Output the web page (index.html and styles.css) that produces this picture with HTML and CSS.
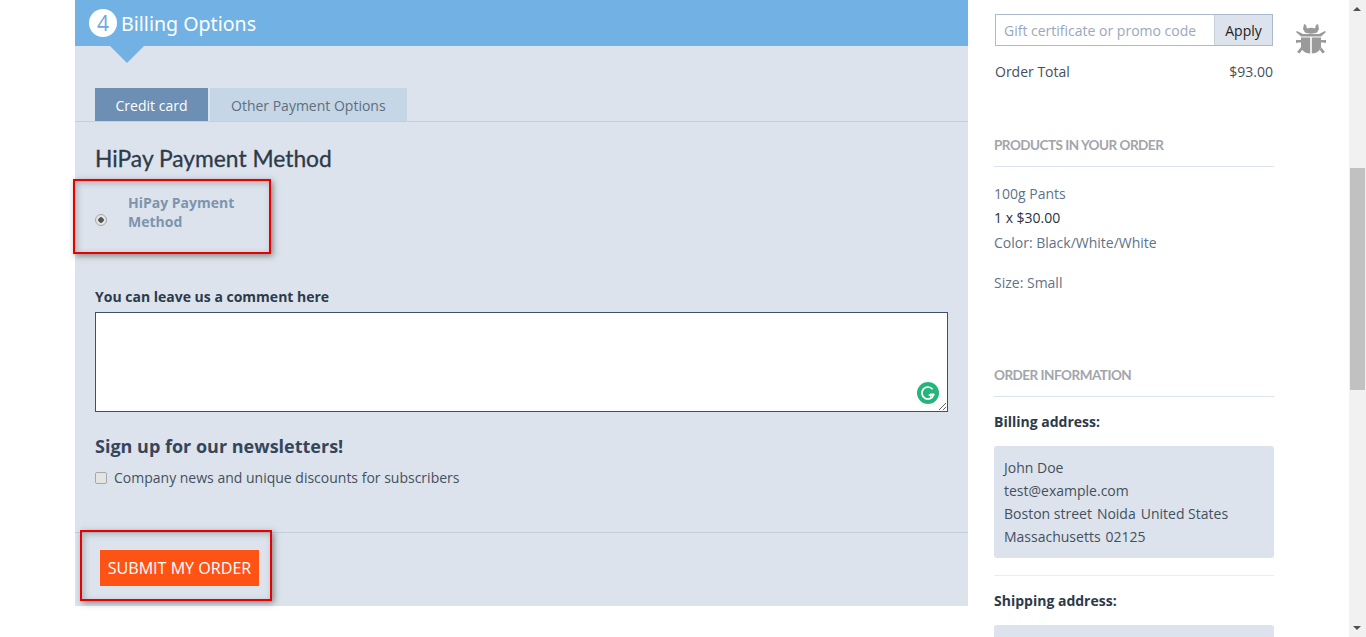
FILE: index.html
```html
<!DOCTYPE html>
<html lang="en">
<head>
    <meta charset="UTF-8">
    <title>Checkout</title>
    <link rel="stylesheet" href="styles.css">
</head>
<body>
    <div class="page">
        <main class="checkout">
            <div class="step-head">
                <span class="step-num">4</span>
                <h2>Billing Options</h2>
            </div>
            <div class="tabs">
                <span class="tab active">Credit card</span>
                <span class="tab">Other Payment Options</span>
            </div>
            <div class="pay-body">
                <h3 class="pay-title">HiPay Payment Method</h3>
                <label class="pay-option">
                    <input type="radio" checked>
                    <span>HiPay Payment Method</span>
                </label>
                <label class="comment-label" for="comment">You can leave us a comment here</label>
                <div class="comment-wrap">
                    <textarea id="comment"></textarea>
                    <svg class="grammarly" width="24" height="24" viewBox="0 0 24 24">
                        <circle cx="12" cy="12" r="11" fill="#25b57b"/>
                        <path d="M16.600 8.200A6 6 0 1 0 17.600 14H12.600" fill="none" stroke="#fff" stroke-width="1.700"/>
                        <path d="M14.800 16.600V13.200H18.200" fill="none" stroke="#fff" stroke-width="1.300"/>
                    </svg>
                </div>
                <h3 class="news-title">Sign up for our newsletters!</h3>
                <label class="news-option">
                    <input type="checkbox">
                    <span>Company news and unique discounts for subscribers</span>
                </label>
            </div>
            <div class="submit-row">
                <button class="submit-btn">SUBMIT MY ORDER</button>
            </div>
            <div class="mark mark-pay"></div>
            <div class="mark mark-submit"></div>
        </main>

        <aside class="summary">
            <div class="promo">
                <input type="text" placeholder="Gift certificate or promo code">
                <button>Apply</button>
            </div>
            <div class="total">
                <span>Order Total</span>
                <span>$93.00</span>
            </div>

            <h4 class="side-head products-head">PRODUCTS IN YOUR ORDER</h4>
            <div class="product">
                <p>100g Pants</p>
                <p class="qty">1 x $30.00</p>
                <p>Color: Black/White/White</p>
                <p class="size">Size: Small</p>
            </div>

            <h4 class="side-head info-head">ORDER INFORMATION</h4>
            <div class="addr-label">Billing address:</div>
            <div class="addr-box">
                <p>John Doe</p>
                <p>test@example.com</p>
                <p><span class="part">Boston street</span><span class="part">Noida</span><span class="part">United States</span></p>
                <p><span class="part">Massachusetts</span><span class="part">02125</span></p>
            </div>
            <hr class="addr-rule">
            <div class="addr-label">Shipping address:</div>
            <div class="addr-box"></div>
        </aside>

        <svg class="bug" width="32" height="34" viewBox="0 0 32 34">
            <path fill="#9a9a9a" d="M9 2l2 1 1 3.500c2.500-1 5.500-1 8 0L21 3l2-1 1 5-2 3.500c-3 1.500-9 1.500-12 0L8 7zM1 10l1-1 6 3h16l6-3 1 1-5 4.500H6zM6 15.500h9.200V31.500C10 31.500 6 28 6 24zM16.800 15.500H26V24c0 4-4 7.500-9.200 7.500zM1 18h5v2.500H3.500L1 21zM31 18h-5v2.500h2.500l2.500.5zM6 25l1.500 2.500-3 4-2.500-1.500zM26 25l-1.500 2.500 3 4 2.500-1.500z"/>
        </svg>
    </div>

    <div class="scrollbar">
        <span class="arrow up"></span>
        <span class="thumb"></span>
        <span class="arrow down"></span>
    </div>
</body>
</html>
```

FILE: styles.css
```css
:root {
    --panel-bg: #dce3ec;
    --blue-head: #72b1e4;
    --text-dark: #2d3a4a;
    --text-body: #45505e;
    --rule: #c3cfdd;
}
html, body {
    height: 100%;
}
body {
    margin: 0;
    height: 637px;
    overflow: hidden;
    background: #fff;
    font-family: "Open Sans", sans-serif;
    font-size: 14px;
    color: var(--text-body);
}
p, h2, h3, h4 {
    margin: 0;
}
.page {
    display: flex;
    align-items: flex-start;
    height: 637px;
    overflow: hidden;
    padding-left: 75px;
}

/* left column */
.checkout {
    position: relative;
    width: 893px;
    height: 606px;
    flex: none;
    background: var(--panel-bg);
}
.step-head {
    position: relative;
    display: flex;
    align-items: center;
    height: 46px;
    padding-left: 14px;
    background: var(--blue-head);
    color: #fff;
}
.step-head::after {
    content: "";
    position: absolute;
    left: 35px;
    top: 46px;
    border-left: 17px solid transparent;
    border-right: 17px solid transparent;
    border-top: 17px solid var(--blue-head);
}
.step-num {
    width: 28px;
    height: 28px;
    margin-right: 4px;
    border-radius: 50%;
    background: #fff;
    color: #72a6e0;
    font-size: 21px;
    line-height: 28px;
    text-align: center;
}
.step-head h2 {
    font-family: "Noto Sans", sans-serif;
    font-size: 19.600px;
    font-weight: 400;
}
.tabs {
    display: flex;
    gap: 2px;
    height: 33px;
    margin-top: 42px;
    padding-left: 20px;
    border-bottom: 1px solid var(--rule);
}
.tab {
    padding: 0 21px;
    background: #c5d6e6;
    color: #5f6e80;
    line-height: 35px;
}
.tab.active {
    width: 113px;
    padding: 0;
    background: #6c8fb3;
    color: #fff;
    text-align: center;
}
.pay-body {
    padding: 22px 20px 0;
}
.pay-title {
    font-family: Lato, sans-serif;
    font-size: 22.800px;
    font-weight: 400;
    -webkit-text-stroke: .3px var(--text-dark);
    line-height: 28px;
    color: var(--text-dark);
}
.pay-option {
    display: flex;
    align-items: center;
    width: 152px;
    height: 60px;
    margin-top: 18px;
    font-weight: 700;
    line-height: 19px;
    color: #7d94ae;
}
.pay-option span {
    margin-top: -16px;
}
.pay-option input {
    appearance: none;
    box-sizing: border-box;
    width: 12px;
    height: 12px;
    margin: 0 21px 0 0;
    flex: none;
    border: 1px solid #a8a8a8;
    border-radius: 50%;
    background: radial-gradient(circle, #555 0 2.500px, #e4e4e4 3px);
}
.comment-label {
    display: block;
    margin-top: 37px;
    font-weight: 700;
    line-height: 19px;
    color: var(--text-dark);
}
.comment-wrap {
    position: relative;
    margin-top: 6px;
}
.comment-wrap textarea {
    display: block;
    box-sizing: border-box;
    width: 853px;
    height: 100px;
    border: 1px solid #3c5170;
    background: #fff;
}
.grammarly {
    position: absolute;
    right: 8px;
    bottom: 7px;
}
.news-title {
    margin-top: 23px;
    font-size: 18px;
    font-weight: 700;
    line-height: 22px;
    color: #35465c;
}
.news-option {
    display: flex;
    align-items: center;
    margin-top: 11px;
    line-height: 19px;
}
.news-option input {
    appearance: none;
    box-sizing: border-box;
    width: 12px;
    height: 12px;
    margin: 0 7px 0 0;
    border: 1px solid #a8a8a8;
    border-radius: 2px;
    background: #e4e4e4;
}
.submit-row {
    position: absolute;
    left: 0;
    right: 0;
    top: 532px;
    padding: 17px 25px;
    border-top: 1px solid var(--rule);
}
.submit-btn {
    display: block;
    width: 159px;
    height: 36px;
    padding: 0;
    border: 0;
    background: #ff5316;
    color: #fff;
    font-family: inherit;
    font-size: 16.100px;
}

/* red annotation boxes drawn over the screenshot */
.mark {
    position: absolute;
    box-sizing: border-box;
    border: 2px solid #e70000;
    box-shadow: 2px 2px 6px rgba(60, 60, 60, .55), inset 2px 2px 6px rgba(60, 60, 60, .3);
}
.mark-pay {
    left: -2px;
    top: 179px;
    width: 198px;
    height: 75px;
}
.mark-submit {
    left: 5px;
    top: 530px;
    width: 192px;
    height: 71px;
}

/* right column */
.summary {
    width: 280px;
    flex: none;
    margin-left: 26px;
    padding-top: 14px;
}
.promo {
    display: flex;
    box-sizing: border-box;
    width: 278px;
    height: 32px;
    margin-left: 1px;
    border: 1px solid #a9bccf;
}
.promo input {
    flex: 1;
    min-width: 0;
    padding: 0 8px;
    border: 0;
    font-family: inherit;
    font-size: 14px;
}
.promo input::placeholder {
    color: #9aa8bb;
}
.promo button {
    width: 58px;
    padding: 0;
    border: 0;
    border-left: 1px solid #c8d0da;
    background: var(--panel-bg);
    color: #222;
    font-family: inherit;
    font-size: 14px;
}
.total {
    display: flex;
    justify-content: space-between;
    width: 278px;
    margin: 16px 0 0 1px;
    line-height: 19px;
}
.side-head {
    padding-bottom: 11px;
    border-bottom: 1px solid #dce3ec;
    font-family: Lato, sans-serif;
    font-size: 13.500px;
    font-weight: 700;
    letter-spacing: -.5px;
    line-height: 20px;
    color: #a2a5ab;
}
.products-head {
    margin-top: 54px;
}
.product {
    margin-top: 14.600px;
    line-height: 24.500px;
    color: #5f7389;
}
.product .qty {
    color: #2a3340;
}
.product .size {
    margin-top: 16px;
}
.info-head {
    margin-top: 69.400px;
}
.addr-label {
    margin-top: 15px;
    font-weight: 700;
    line-height: 19px;
    color: var(--text-dark);
}
.addr-box {
    box-sizing: border-box;
    height: 112px;
    margin-top: 15px;
    padding: 10px;
    border-radius: 3px;
    background: var(--panel-bg);
    line-height: 23px;
}
.part {
    margin-right: 5px;
}
.addr-rule {
    height: 1px;
    margin: 17px 0 0;
    border: 0;
    background: #e9ecf0;
}
.bug {
    flex: none;
    margin: 22px 0 0 21px;
}

/* fake browser scrollbar */
.scrollbar {
    position: fixed;
    top: 0;
    right: 0;
    bottom: 0;
    width: 17px;
    background: #f1f1f1;
}
.thumb {
    position: absolute;
    top: 168px;
    left: 1px;
    width: 15px;
    height: 222px;
    background: #c1c1c1;
}
.arrow {
    position: absolute;
    left: 4px;
    border-left: 4px solid transparent;
    border-right: 4px solid transparent;
}
.arrow.up {
    top: 7px;
    border-bottom: 4px solid #505050;
}
.arrow.down {
    bottom: 7px;
    border-top: 4px solid #505050;
}
```
